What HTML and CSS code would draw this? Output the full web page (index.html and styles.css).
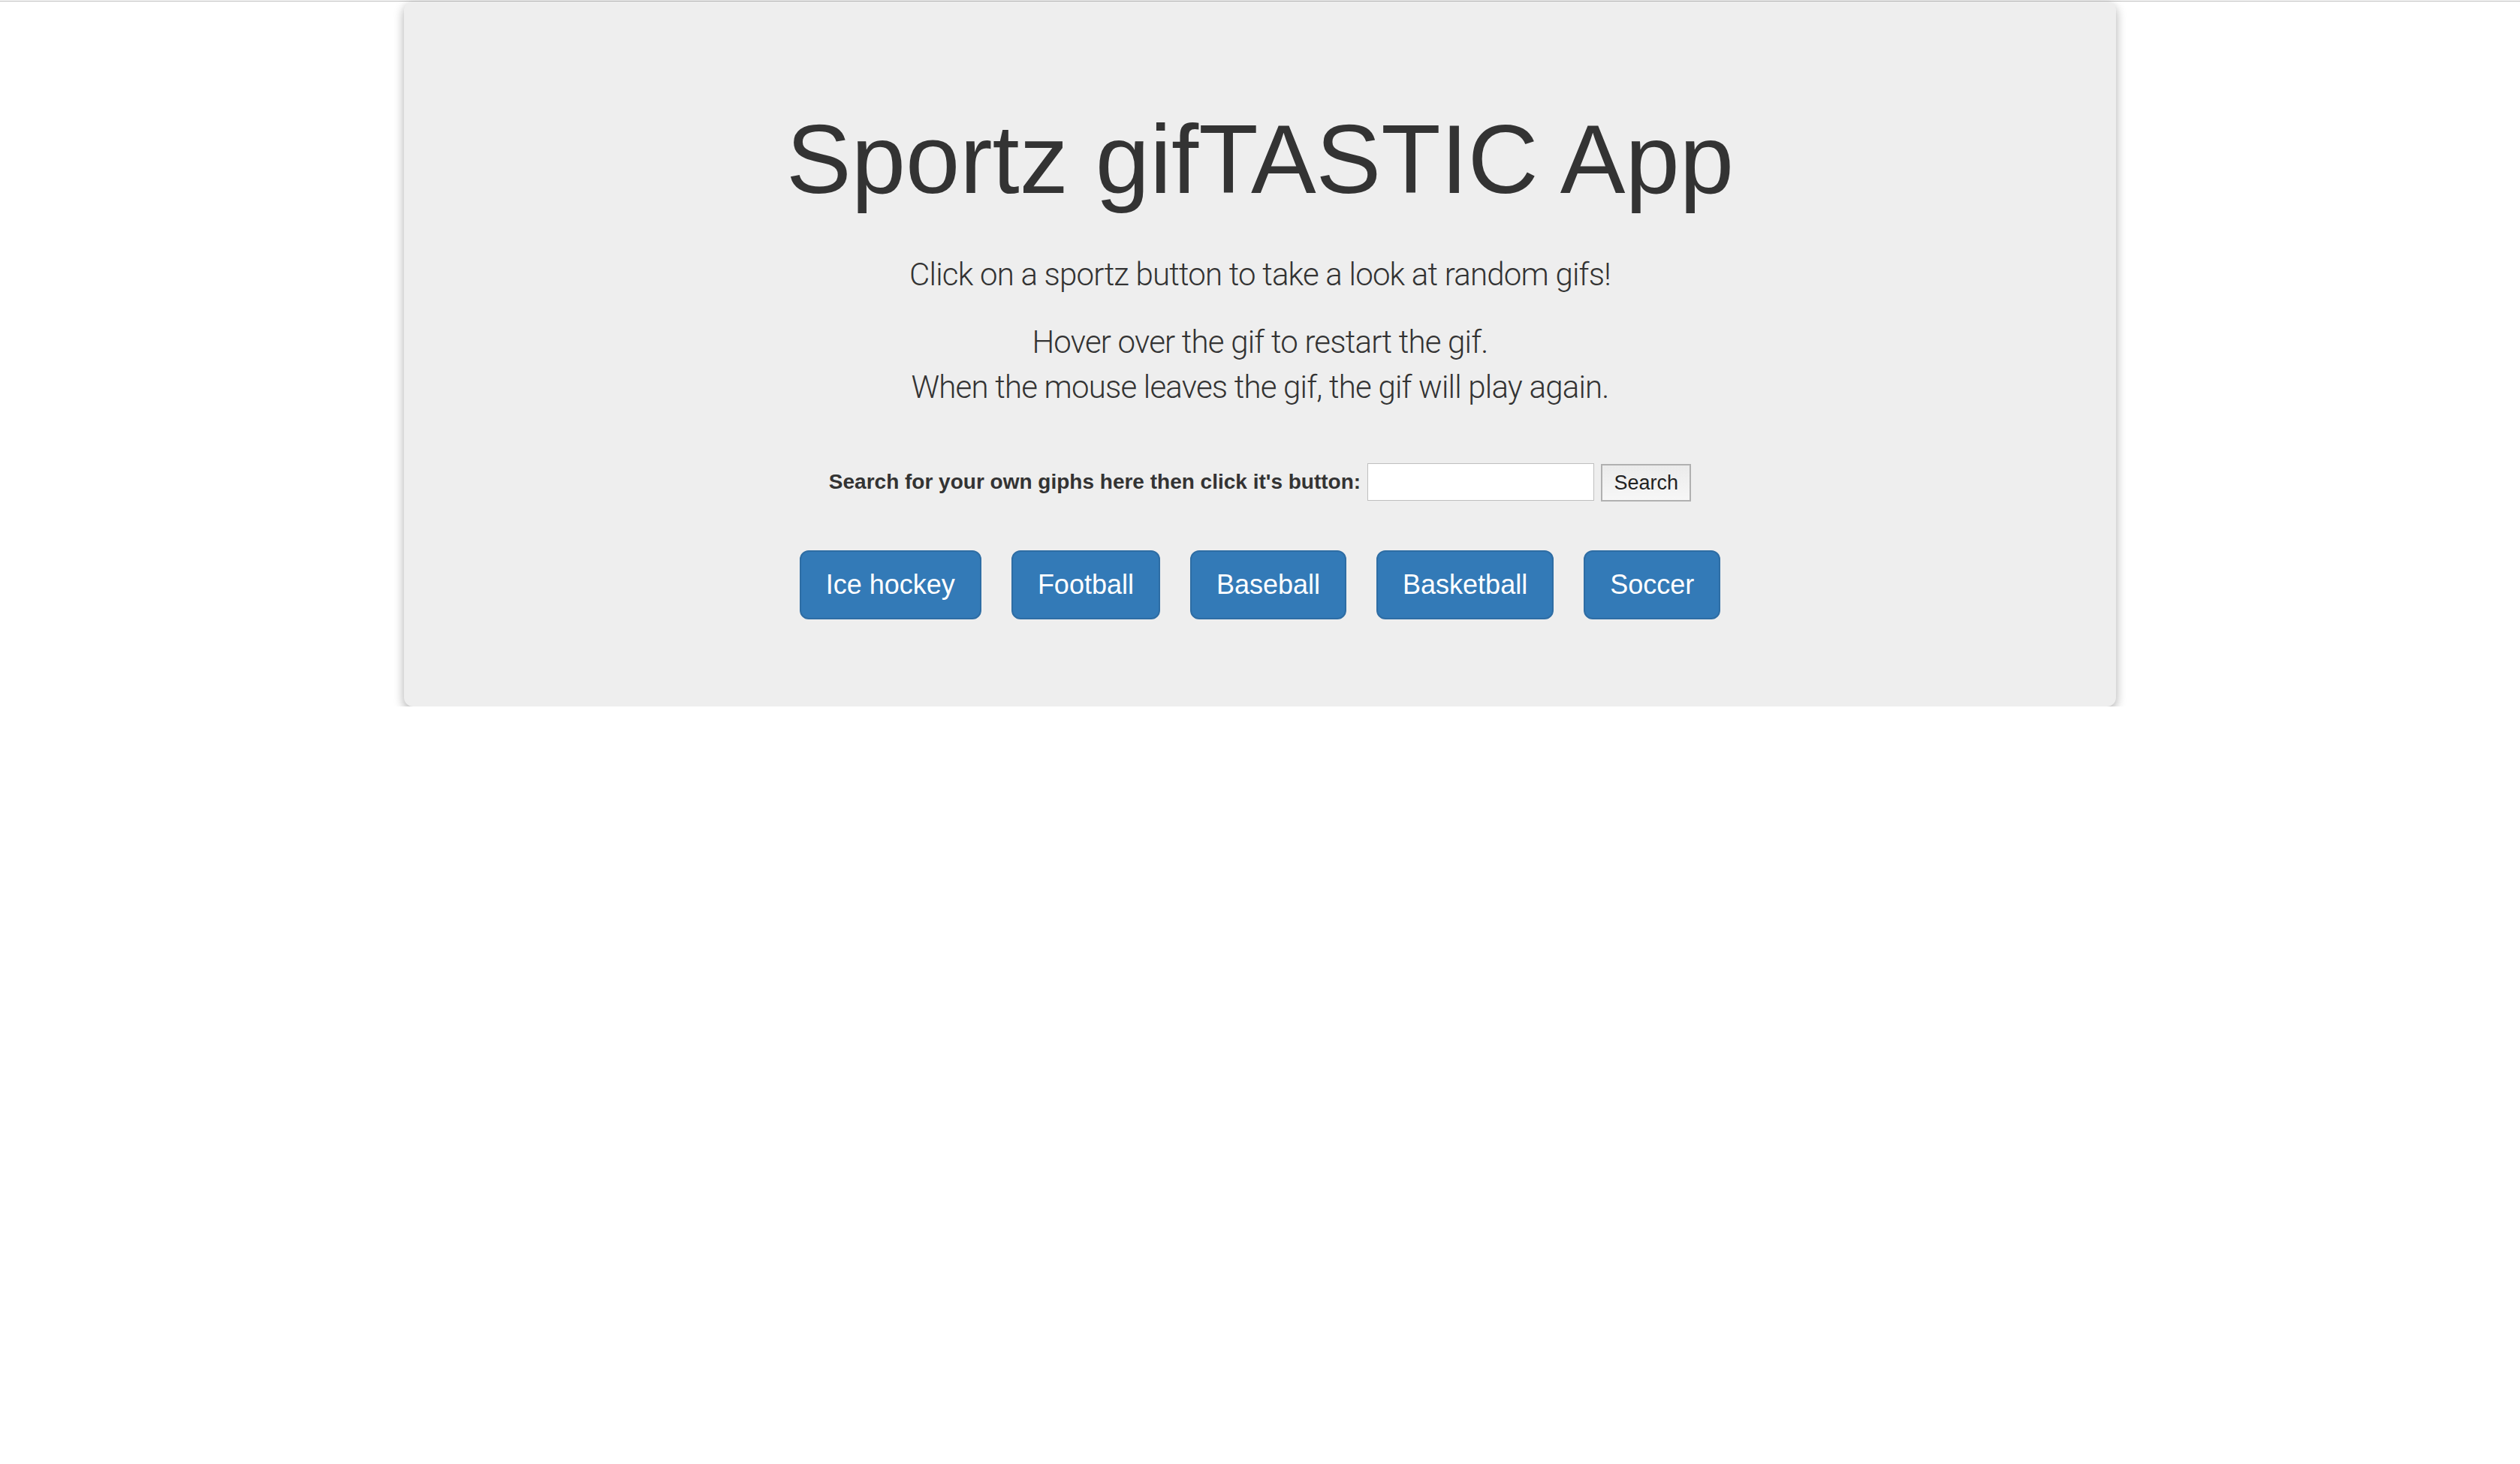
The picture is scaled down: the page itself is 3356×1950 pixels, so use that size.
FILE: index.html
```html
<!DOCTYPE html>
<html lang="en">
<head>
<meta charset="utf-8">
<title>Sportz gifTASTIC App</title>
<link rel="stylesheet" href="styles.css">
</head>
<body>
<div class="topline"></div>
<div class="jumbotron">
  <h1 class="title">Sportz gifTASTIC App</h1>
  <p class="lead">Click on a sportz button to take a look at random gifs!</p>
  <p class="lead">Hover over the gif to restart the gif.<br>When the mouse leaves the gif, the gif will play again.</p>
  <form class="search-row">
    <label class="search-label" for="q">Search for your own giphs here then click it's button:</label>
    <input class="search-input" id="q" type="text">
    <button class="search-btn" type="button">Search</button>
  </form>
  <div class="sports">
    <button class="btn-sport" type="button">Ice hockey</button>
    <button class="btn-sport" type="button">Football</button>
    <button class="btn-sport" type="button">Baseball</button>
    <button class="btn-sport" type="button">Basketball</button>
    <button class="btn-sport" type="button">Soccer</button>
  </div>
</div>
</body>
</html>
```
FILE: styles.css
```css
html, body {
  margin: 0;
  padding: 0;
  background: #ffffff;
}
body {
  font-family: "Liberation Sans", Arial, Helvetica, sans-serif;
  color: #333333;
}
.topline {
  height: 1px;
  margin-top: 1px;
  background: #bcbcbc;
}
.jumbotron {
  box-sizing: border-box;
  width: 2280px;
  margin: 0 auto;
  padding: 140px 120px 116px;
  background: #eeeeee;
  border-radius: 12px;
  box-shadow: 0 5px 14px rgba(0, 0, 0, 0.33);
  text-align: center;
}
.title {
  margin: 0 0 54px;
  font-size: 130px;
  line-height: 140px;
  font-weight: 400;
  color: #333333;
}
.lead {
  margin: 0 0 30px;
  font-family: "Roboto", "Liberation Sans", sans-serif;
  font-weight: 300;
  font-size: 42px;
  line-height: 60px;
  letter-spacing: -0.8px;
  color: #333333;
}
.search-row {
  margin-top: 70px;
  display: flex;
  justify-content: center;
  align-items: center;
  gap: 9px;
}
.search-label {
  font-weight: 700;
  font-size: 28px;
  color: #333333;
}
.search-input {
  box-sizing: border-box;
  width: 302px;
  height: 50px;
  margin: 0;
  border: 1px solid #bfbfbf;
  background: #ffffff;
  padding: 0 6px;
  font-size: 27px;
}
.search-btn {
  box-sizing: border-box;
  width: 120px;
  height: 50px;
  margin: 2px 0 0;
  border: 2px solid #b0b0b0;
  background: linear-gradient(#ebebeb, #f7f7f7);
  font-family: "Liberation Sans", Arial, sans-serif;
  font-size: 27px;
  color: #222222;
  padding: 0;
}
.sports {
  margin-top: 65px;
  display: flex;
  justify-content: center;
  gap: 40px;
}
.btn-sport {
  box-sizing: border-box;
  margin: 0;
  padding: 20px 33px;
  border: 2px solid #2e6da4;
  border-radius: 12px;
  background: #337ab7;
  color: #ffffff;
  font-family: "Liberation Sans", Arial, sans-serif;
  font-size: 36px;
  line-height: 48px;
}
```
